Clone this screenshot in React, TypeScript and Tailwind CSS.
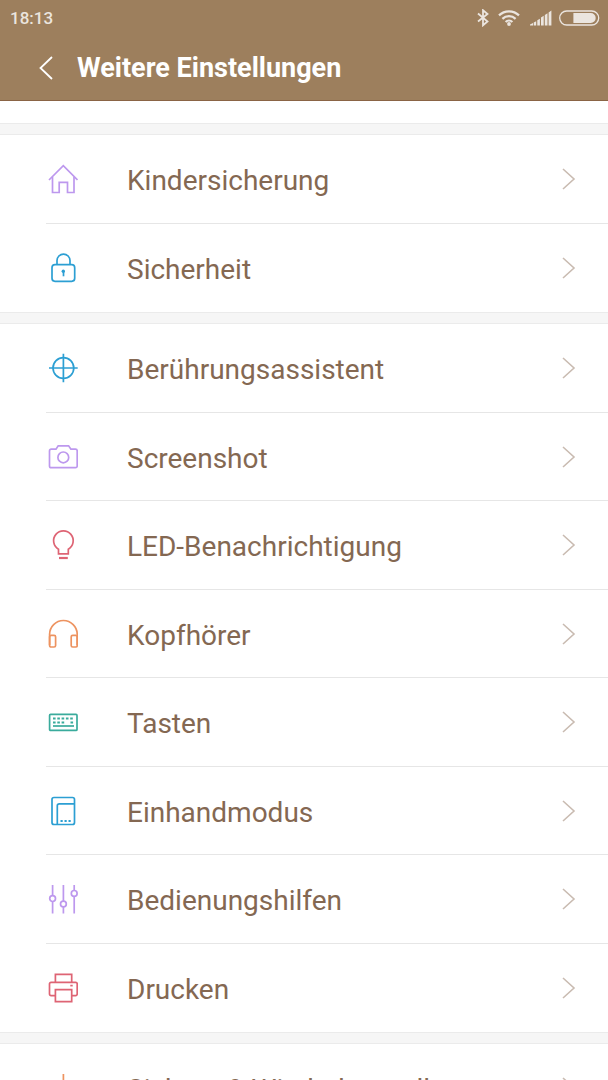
import type { ReactNode } from "react";

interface Setting {
    label: string;
    color: string;
    icon: ReactNode;
}

const safety: Setting[] = [
    {
        label: "Kindersicherung",
        color: "text-[#bd98ee]",
        icon: <>
            <path d="M1 16 15.3 1.7 29.5 16" />
            <path d="M4.5 13v15.5h6.7V18.3h8.3v10.2H26V13" />
        </>,
    },
    {
        label: "Sicherheit",
        color: "text-[#2c9fd3]",
        icon: <>
            <rect x="4" y="11.7" width="22.7" height="16.6" rx="3" />
            <path d="M9 11.5V7.6a6.5 6.5 0 0 1 13 0v3.9" />
            <circle cx="15.3" cy="18.3" r="1.7" fill="currentColor" stroke="none" />
            <path d="M15.5 18v5.3" />
        </>,
    },
];

const features: Setting[] = [
    {
        label: "Berührungsassistent",
        color: "text-[#2c9fd3]",
        icon: <>
            <circle cx="15.4" cy="15" r="10.4" />
            <path d="M1 15h28.7M15.4.7v28.6" />
        </>,
    },
    {
        label: "Screenshot",
        color: "text-[#bd98ee]",
        icon: <>
            <path d="M3.2 7.2H8l2.2-3.4h10.4L22.9 7.2h4.6a1.7 1.7 0 0 1 1.7 1.7v15a1.7 1.7 0 0 1-1.7 1.7H3.2a1.7 1.7 0 0 1-1.7-1.7v-15a1.7 1.7 0 0 1 1.7-1.7z" />
            <circle cx="15.3" cy="15.4" r="5.4" />
        </>,
    },
    {
        label: "LED-Benachrichtigung",
        color: "text-[#de6474]",
        icon: <>
            <path d="M10.5 23.8v-4.6a9.8 9.8 0 1 1 9.8 0v4.6z" />
            <path d="M11 28h8.8" strokeWidth="2.2" />
        </>,
    },
    {
        label: "Kopfhörer",
        color: "text-[#ed9360]",
        icon: <>
            <path d="M1.6 26V15.3a13.8 13.8 0 0 1 27.6 0V26" />
            <rect x="1.6" y="16.3" width="6" height="11.7" rx="1.5" />
            <rect x="23.2" y="16.3" width="6" height="11.7" rx="1.5" />
        </>,
    },
    {
        label: "Tasten",
        color: "text-[#3aab9c]",
        icon: <>
            <rect x="1.6" y="7.4" width="27.4" height="16" rx="1" />
            <path d="M5 11.6h21.5" strokeWidth="2" strokeDasharray="2.6 1.7" />
            <path d="M5 15.4h11.5M22.5 15.4h4" strokeWidth="2" strokeDasharray="2.6 1.7" />
            <path d="M5 19h21" />
        </>,
    },
    {
        label: "Einhandmodus",
        color: "text-[#2c9fd3]",
        icon: <>
            <rect x="4" y="1.5" width="22.5" height="27" rx="2" />
            <path d="M9.3 28.5V9.8a2 2 0 0 1 2-2h15.2" />
            <path d="M12.5 25h10.5" strokeWidth="1.8" strokeDasharray="2.2 1.8" />
        </>,
    },
    {
        label: "Bedienungshilfen",
        color: "text-[#bd98ee]",
        icon: <>
            <path d="M4.6 1v10.6M4.6 17.6v12M15.4 1v16M15.4 23v6.6M26.2 1v5.4M26.2 12.4v17.2" />
            <circle cx="4.6" cy="14.6" r="2.9" />
            <circle cx="15.4" cy="20" r="2.9" />
            <circle cx="26.2" cy="9.4" r="2.9" />
        </>,
    },
    {
        label: "Drucken",
        color: "text-[#de6474]",
        icon: <>
            <path d="M7.4 9.3V1.4h16.3v7.9" />
            <path d="M7.4 22.6H3a1.5 1.5 0 0 1-1.5-1.5V10.8A1.5 1.5 0 0 1 3 9.3h24.7a1.5 1.5 0 0 1 1.5 1.5v10.3a1.5 1.5 0 0 1-1.5 1.5h-4" />
            <path d="M7.4 16.6h16.3v12H7.4z" />
            <path d="M22.3 12.6h2.4" />
        </>,
    },
];

const backup: Setting[] = [
    {
        label: "Sichern & Wiederherstellen",
        color: "text-[#ed9360]",
        icon: <>
            <path d="M15.4 1v18M9 13l6.4 6.4 6.4-6.4" />
            <path d="M1.5 18v10.5h27.7V18" />
        </>,
    },
];

const SettingRow = ({ setting }: { setting: Setting }) => {
    return <li className="group odd:h-[89px] even:h-[88px]">
        <a href="#" className="ml-[46px] flex h-full items-center border-b border-[#e6e6e6] pr-8 pl-[2px] group-last:border-transparent">
            <svg viewBox="0 0 30 30" fill="none" stroke="currentColor" strokeWidth="1.7" className={"size-[30px] shrink-0 " + setting.color}>
                {setting.icon}
            </svg>
            <span className="ml-[49px] flex-1 pt-1 text-[28px] leading-8 whitespace-nowrap text-[#846852]">{setting.label}</span>
            <svg viewBox="0 0 14 22" fill="none" stroke="#c9bbb1" strokeWidth="1.6" className="h-[22px] w-[14px] shrink-0">
                <path d="M1 1 12 11 1 21" />
            </svg>
        </a>
    </li>
}

const SettingGroup = ({ settings }: { settings: Setting[] }) => {
    return <>
        <div className="h-3 border-y border-[#ebebeb] bg-[#f6f6f6]"></div>
        <ul>
            {settings.map((setting) => (
                <SettingRow key={setting.label} setting={setting} />
            ))}
        </ul>
    </>
}

const StatusBar = () => {
    return <div className="flex h-9 items-center justify-between pr-2 pl-[10px] text-[#ebe5df]">
        <span className="text-[17px] leading-5 font-medium">18:13</span>
        <div className="flex items-center">
            <svg viewBox="0 0 12 18" fill="none" stroke="currentColor" strokeWidth="1.8" className="h-[18px] w-3">
                <path d="M1 4.5 10.5 12.5 6 16.3V1.2L10.5 5 1 12.5" />
            </svg>
            <svg viewBox="0 0 22 16" fill="none" stroke="currentColor" strokeWidth="2.2" className="ml-[9px] h-4 w-[22px]">
                <path d="M1 5.4a14.2 14.2 0 0 1 20 0M4.4 8.9a9.4 9.4 0 0 1 13.2 0M7.6 12a4.9 4.9 0 0 1 6.8 0" />
                <circle cx="11" cy="14" r="1.9" fill="currentColor" stroke="none" />
            </svg>
            <svg viewBox="0 0 22 16" fill="currentColor" className="ml-[10px] h-4 w-[22px]">
                <path d="M0 15.5v-1l3-1.5v2.5zM3.7 12.4l2.5-1.2v4.3H3.7zM7.3 10.2l2.6-1.4v6.7H7.3zM11 7.6l2.7-1.8v9.7H11zM14.8 5l2.7-1.7v12.2h-2.7zM18.6 2.4l2.8-1.8v14.9h-2.8z" />
            </svg>
            <svg viewBox="0 0 42 16" className="ml-[6px] h-4 w-[42px]">
                <rect x="1.7" y="1" width="39" height="14" rx="7" fill="none" stroke="currentColor" strokeWidth="1.3" />
                <path d="M15.4 3h17.3a5 5 0 0 1 0 10H15.4z" fill="currentColor" />
            </svg>
        </div>
    </div>
}

export default function App() {
    return <div className="flex h-screen flex-col overflow-hidden bg-white font-[Roboto,sans-serif]">
        <header className="shrink-0 border-b border-[#8a6445] bg-[#9d7f5d]">
            <StatusBar />
            <div className="flex h-16 items-center pl-[39px] text-white">
                <button aria-label="Zurück">
                    <svg viewBox="0 0 14 24" fill="none" stroke="currentColor" strokeWidth="1.8" className="h-6 w-[14px]">
                        <path d="M13 1 1.5 12 13 23" />
                    </svg>
                </button>
                <h1 className="ml-6 text-[27px] leading-8 font-bold">Weitere Einstellungen</h1>
            </div>
        </header>
        <main className="min-h-0 flex-1 overflow-hidden pt-[22px]">
            <SettingGroup settings={safety} />
            <SettingGroup settings={features} />
            <SettingGroup settings={backup} />
        </main>
    </div>
}
